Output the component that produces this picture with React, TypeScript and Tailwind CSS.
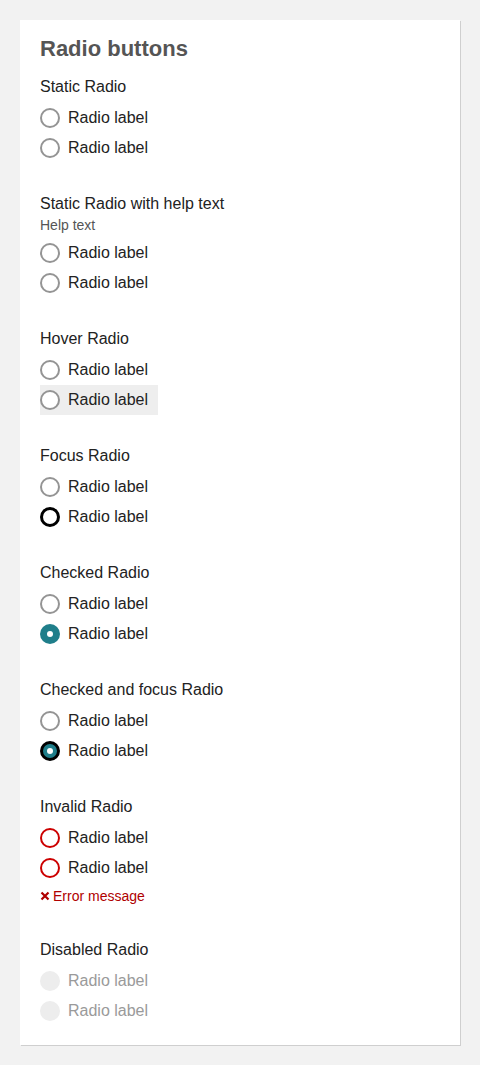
/**
 * Radio button states reference sheet.
 */

type RadioState = 'static' | 'hover' | 'focus' | 'checked' | 'checkedFocus' | 'invalid' | 'disabled';

interface RadioGroupProps {
  legend: string;
  helpText?: string;
  first: RadioState;
  second: RadioState;
  error?: string;
}

function RadioDot({ state }: { state: RadioState }) {
  if (state === 'disabled') {
    return <span className="h-5 w-5 shrink-0 rounded-full bg-[#ededed]" />;
  }
  if (state === 'checked') {
    return (
      <span className="flex h-5 w-5 shrink-0 items-center justify-center rounded-full bg-[#1f7e8a]">
        <span className="h-[6px] w-[6px] rounded-full bg-white" />
      </span>
    );
  }
  if (state === 'checkedFocus') {
    return (
      <span className="flex h-5 w-5 shrink-0 items-center justify-center rounded-full border-[3px] border-black bg-[#1f7e8a]">
        <span className="h-[6px] w-[6px] rounded-full bg-white" />
      </span>
    );
  }
  if (state === 'focus') {
    return <span className="h-5 w-5 shrink-0 rounded-full border-[3px] border-black bg-white" />;
  }
  if (state === 'invalid') {
    return <span className="h-5 w-5 shrink-0 rounded-full border-2 border-[#cc0000] bg-white" />;
  }
  return <span className="h-5 w-5 shrink-0 rounded-full border-2 border-[#949494] bg-white" />;
}

function RadioRow({ state }: { state: RadioState }) {
  const rowBg = state === 'hover' ? 'bg-[#eeeeee] pr-[10px]' : '';
  const textColor = state === 'disabled' ? 'text-[#9a9a9a]' : 'text-[#222222]';

  return (
    <div className={`flex h-[30px] w-fit items-center gap-2 ${rowBg}`}>
      <RadioDot state={state} />
      <span className={`text-[16px] leading-5 ${textColor}`}>Radio label</span>
    </div>
  );
}

function RadioGroup({ legend, helpText, first, second, error }: RadioGroupProps) {
  return (
    <div className={error ? 'mb-[35px]' : 'mb-[31px]'}>
      <div className="text-[16px] leading-5 text-[#222222]">{legend}</div>
      {helpText && <div className="pt-[2px] text-[14px] leading-[18px] text-[#555555]">{helpText}</div>}
      <div className={helpText ? 'mt-[4px]' : 'mt-[6px]'}>
        <RadioRow state={first} />
        <RadioRow state={second} />
      </div>
      {error && (
        <div className="mt-[4px] flex items-center gap-[3px] text-[14px] leading-[18px] text-[#b00000]">
          <svg width="10" height="10" viewBox="0 0 10 10" aria-hidden="true">
            <path d="M1.5 1.5 L8.5 8.5 M8.5 1.5 L1.5 8.5" stroke="#b00000" strokeWidth="2.2" />
          </svg>
          {error}
        </div>
      )}
    </div>
  );
}

export default function App() {
  return (
    <div className="min-h-[1065px] bg-[#f2f2f2] p-5 font-['Liberation_Sans',Arial,sans-serif]">
      <div className="bg-white px-5 pb-[19px] pt-[15px] shadow-[1px_1px_0_#cfcfcf]">
        <h2 className="text-[22px] font-bold leading-7 text-[#555555]">Radio buttons</h2>
        <div className="mt-[14px]">
          <RadioGroup legend="Static Radio" first="static" second="static" />
          <RadioGroup legend="Static Radio with help text" helpText="Help text" first="static" second="static" />
          <RadioGroup legend="Hover Radio" first="static" second="hover" />
          <RadioGroup legend="Focus Radio" first="static" second="focus" />
          <RadioGroup legend="Checked Radio" first="static" second="checked" />
          <RadioGroup legend="Checked and focus Radio" first="static" second="checkedFocus" />
          <RadioGroup legend="Invalid Radio" first="invalid" second="invalid" error="Error message" />
          <div>
            <div className="text-[16px] leading-5 text-[#222222]">Disabled Radio</div>
            <div className="mt-[6px]">
              <RadioRow state="disabled" />
              <RadioRow state="disabled" />
            </div>
          </div>
        </div>
      </div>
    </div>
  );
}
